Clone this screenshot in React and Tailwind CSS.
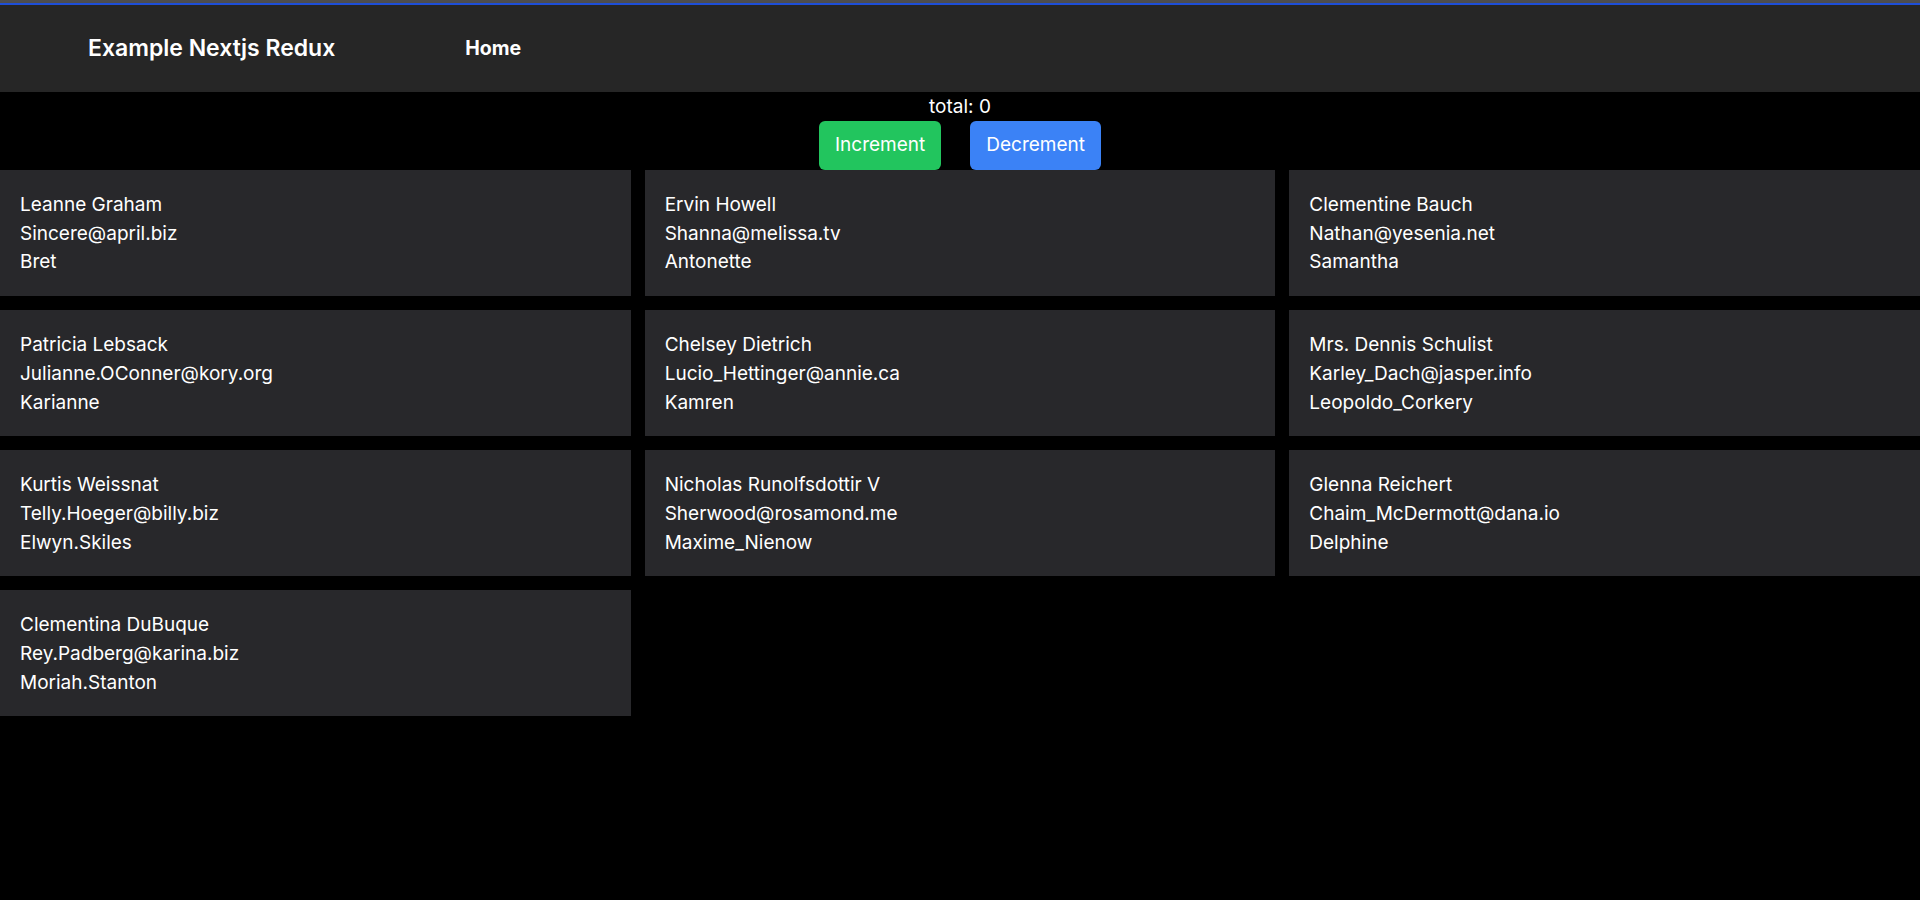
import React, { useState } from 'react';

const users = [
  { name: 'Leanne Graham', email: 'Sincere@april.biz', username: 'Bret' },
  { name: 'Ervin Howell', email: 'Shanna@melissa.tv', username: 'Antonette' },
  { name: 'Clementine Bauch', email: 'Nathan@yesenia.net', username: 'Samantha' },
  { name: 'Patricia Lebsack', email: 'Julianne.OConner@kory.org', username: 'Karianne' },
  { name: 'Chelsey Dietrich', email: 'Lucio_Hettinger@annie.ca', username: 'Kamren' },
  { name: 'Mrs. Dennis Schulist', email: 'Karley_Dach@jasper.info', username: 'Leopoldo_Corkery' },
  { name: 'Kurtis Weissnat', email: 'Telly.Hoeger@billy.biz', username: 'Elwyn.Skiles' },
  { name: 'Nicholas Runolfsdottir V', email: 'Sherwood@rosamond.me', username: 'Maxime_Nienow' },
  { name: 'Glenna Reichert', email: 'Chaim_McDermott@dana.io', username: 'Delphine' },
  { name: 'Clementina DuBuque', email: 'Rey.Padberg@karina.biz', username: 'Moriah.Stanton' }
];

const App = () => {
  const [total, setTotal] = useState(0);

  return (
    <div className="min-h-[900px] bg-black text-white font-['Inter','Liberation_Sans',sans-serif]">
      <div className="h-[3px] bg-[#4d4d4f]"></div>
      <div className="h-[2px] bg-[#1d4ed8]"></div>
      <header className="h-[87px] bg-[#262626] flex items-center">
        <h1 className="ml-[88px] text-[23px] font-semibold">Example Nextjs Redux</h1>
        <nav className="ml-[130px]">
          <a href="#" className="text-[19.5px] font-bold">Home</a>
        </nav>
      </header>

      <div className="flex flex-col items-center">
        <p className="text-[19px] leading-[29px]">total: {total}</p>
        <div className="flex gap-[29px]">
          <button
            onClick={() => setTotal(total + 1)}
            className="h-[49px] px-4 text-[19px] bg-[#22c55e] rounded-md"
          >
            Increment
          </button>
          <button
            onClick={() => setTotal(total - 1)}
            className="h-[49px] px-4 text-[19px] bg-[#3b82f6] rounded-md"
          >
            Decrement
          </button>
        </div>
      </div>

      <div className="grid grid-cols-3 gap-[14px]">
        {users.map((user, i) => (
          <div key={i} className="bg-[#28282b] px-5 pt-[21px] pb-[19px] text-[19px] leading-[28.7px]">
            <p>{user.name}</p>
            <p>{user.email}</p>
            <p>{user.username}</p>
          </div>
        ))}
      </div>
    </div>
  );
};

export default App;
